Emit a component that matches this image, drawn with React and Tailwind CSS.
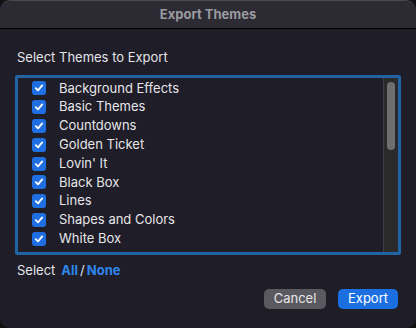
import React from "react";

const items = [
  "Background Effects",
  "Basic Themes",
  "Countdowns",
  "Golden Ticket",
  "Lovin' It",
  "Black Box",
  "Lines",
  "Shapes and Colors",
  "White Box",
];

function Check() {
  return (
    <div className="w-[14px] h-[14px] rounded-[3px] bg-[#1f6fe3] flex items-center justify-center">
      <svg width="10" height="10" viewBox="0 0 10 10" fill="none">
        <path d="M1.8 5.2 L4 7.4 L8.2 2.4" stroke="white" strokeWidth="1.8" strokeLinecap="round" strokeLinejoin="round" />
      </svg>
    </div>
  );
}

export default function App() {
  return (
    <div className="w-[416px] h-[328px] bg-[#111114]" style={{ fontFamily: '"Inter", "Liberation Sans", sans-serif' }}>
      <div className="w-full h-full rounded-[10px] overflow-hidden bg-[#1e1d28] flex flex-col border-t border-[#4a4a50]">
        <div className="h-[28px] shrink-0 bg-[#2c2b33] border-b border-black flex items-center justify-center">
          <span className="text-[13px] font-bold text-[#9b9aa0]">Export Themes</span>
        </div>
        <div className="px-[15px] pt-[19px] flex flex-col">
          <div className="text-[13px] text-[#e4e4e6] pl-[2px] leading-[18px]">Select Themes to Export</div>
          <div className="mt-[9px] h-[180px] border-[3px] border-[#2064a3] rounded-[2px] flex bg-[#1e1d28]">
            <div className="flex-1 pt-[1px] flex flex-col">
              {items.map((t) => (
                <div key={t} className="h-[18.8px] flex items-center pl-[14px] gap-[13px]">
                  <Check />
                  <span className="text-[13px] text-[#e6e6e8]">{t}</span>
                </div>
              ))}
            </div>
            <div className="w-[15px] bg-[#2a2a2b] border-l border-[#3e3e40] pt-[4px] flex justify-center">
              <div className="w-[8px] h-[68px] rounded-full bg-[#6e6e6f]" />
            </div>
          </div>
          <div className="mt-[6px] pl-[2px] text-[13px] text-[#e4e4e6] flex items-center gap-[6px]">
            <span>Select</span>
            <span>
              <span className="font-bold text-[#2f86ec]">All</span>
              <span className="mx-[2px]">/</span>
              <span className="font-bold text-[#2f86ec]">None</span>
            </span>
          </div>
          <div className="mt-[8px] flex justify-end gap-[12px] pr-[3px]">
            <div className="w-[62px] h-[20px] rounded-[5px] bg-[#5a595f] text-[13px] text-[#e6e6e8] flex items-center justify-center">Cancel</div>
            <div className="w-[60px] h-[20px] rounded-[5px] bg-[#1b6fe0] text-[13px] text-white flex items-center justify-center">Export</div>
          </div>
        </div>
      </div>
    </div>
  );
}
